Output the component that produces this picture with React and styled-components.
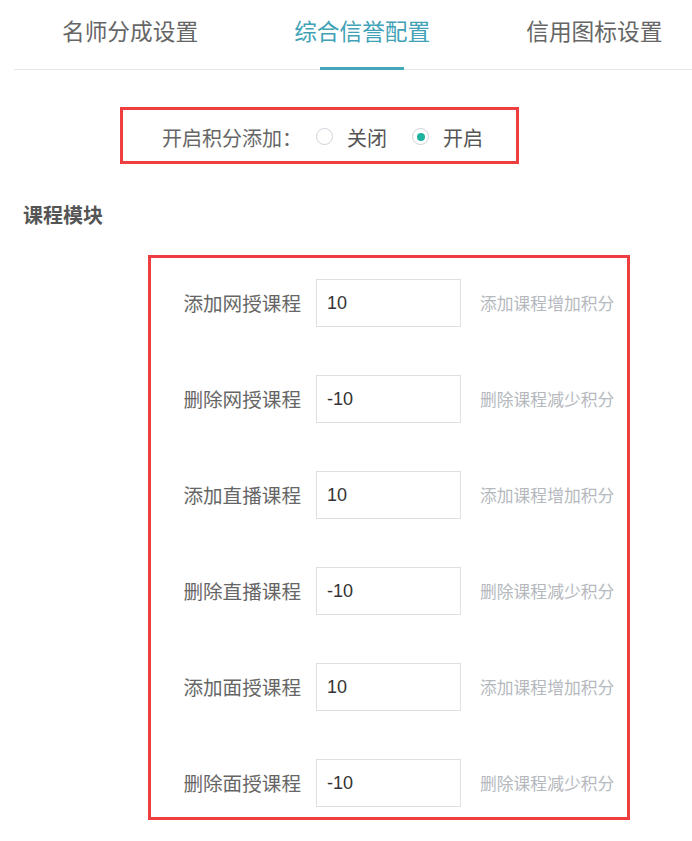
import React from "react";
import styled, { createGlobalStyle } from "styled-components";

const Global = createGlobalStyle`
  html, body { margin: 0; padding: 0; background: #fff; }
  body { font-family: "Noto Sans CJK SC", "Noto Sans", sans-serif; color: #555; }
  * { box-sizing: border-box; }
`;

const Page = styled.div`
  padding-left: 15px;
  width: 692px;
`;

const TabBar = styled.div`
  display: flex;
  height: 70px;
  border-bottom: 1px solid #e3e8ea;
  margin-left: -1px;
`;

const Tab = styled.div`
  position: relative;
  height: 69px;
  padding: 0 48px 8px;
  display: flex;
  align-items: center;
  font-size: 22.7px;
  white-space: nowrap;
  color: ${(p) => (p.$active ? "#3fa2b6" : "#666")};
  &::after {
    content: "";
    display: ${(p) => (p.$active ? "block" : "none")};
    position: absolute;
    left: 50%;
    bottom: -1px;
    width: 84px;
    margin-left: -42px;
    height: 3px;
    background: #44a8ba;
  }
`;

const SwitchBox = styled.div`
  margin: 37px 0 0 105px;
  width: 399px;
  height: 57px;
  border: 3px solid #ee3e40;
  display: flex;
  align-items: center;
  padding: 4px 0 0 39px;
  font-size: 20px;
  color: #666;
`;

const SwitchLabel = styled.span`
  margin-right: 14px;
`;

const RadioItem = styled.label`
  display: flex;
  align-items: center;
  margin-right: 25px;
  color: #555;
`;

const RadioCircle = styled.span`
  width: 17px;
  height: 17px;
  border-radius: 50%;
  border: 1px solid #cdd3d9;
  margin-right: 14px;
  margin-top: -2px;
  display: flex;
  align-items: center;
  justify-content: center;
  &::after {
    content: "";
    display: ${(p) => (p.$checked ? "block" : "none")};
    width: 8px;
    height: 8px;
    border-radius: 50%;
    background: #1fb39f;
  }
`;

const SectionTitle = styled.div`
  margin: 38px 0 0 8px;
  font-size: 20px;
  font-weight: bold;
  color: #555;
  line-height: 26px;
`;

const FormBox = styled.div`
  margin: 27px 0 0 133px;
  width: 482px;
  height: 565px;
  border: 3px solid #ee3e40;
  padding: 21px 0 10px;
  display: flex;
  flex-direction: column;
  gap: 48px;
`;

const Row = styled.div`
  display: flex;
  align-items: center;
  height: 48px;
`;

const Label = styled.div`
  width: 150px;
  margin-right: 15px;
  text-align: right;
  font-size: 19.6px;
  color: #666;
  white-space: nowrap;
  padding-bottom: 2px;
`;

const Input = styled.input`
  width: 145px;
  height: 48px;
  border: 1px solid #dcdfe4;
  padding: 0 10px;
  font-family: "Liberation Sans", "Noto Sans", sans-serif;
  font-size: 18px;
  color: #333;
  outline: none;
  background: #fff;
`;

const Hint = styled.div`
  margin-left: 19px;
  font-size: 16.8px;
  color: #b5b9be;
  white-space: nowrap;
`;

const tabs = ["名师分成设置", "综合信誉配置", "信用图标设置"];

const rows = [
  ["添加网授课程", "10", "添加课程增加积分"],
  ["删除网授课程", "-10", "删除课程减少积分"],
  ["添加直播课程", "10", "添加课程增加积分"],
  ["删除直播课程", "-10", "删除课程减少积分"],
  ["添加面授课程", "10", "添加课程增加积分"],
  ["删除面授课程", "-10", "删除课程减少积分"],
];

export default function App() {
  return (
    <Page>
      <Global />
      <TabBar>
        {tabs.map((t, i) => (
          <Tab key={t} $active={i === 1}>
            {t}
          </Tab>
        ))}
      </TabBar>
      <SwitchBox>
        <SwitchLabel>开启积分添加：</SwitchLabel>
        <RadioItem>
          <RadioCircle />
          关闭
        </RadioItem>
        <RadioItem>
          <RadioCircle $checked />
          开启
        </RadioItem>
      </SwitchBox>
      <SectionTitle>课程模块</SectionTitle>
      <FormBox>
        {rows.map(([label, value, hint]) => (
          <Row key={label}>
            <Label>{label}</Label>
            <Input defaultValue={value} />
            <Hint>{hint}</Hint>
          </Row>
        ))}
      </FormBox>
    </Page>
  );
}
